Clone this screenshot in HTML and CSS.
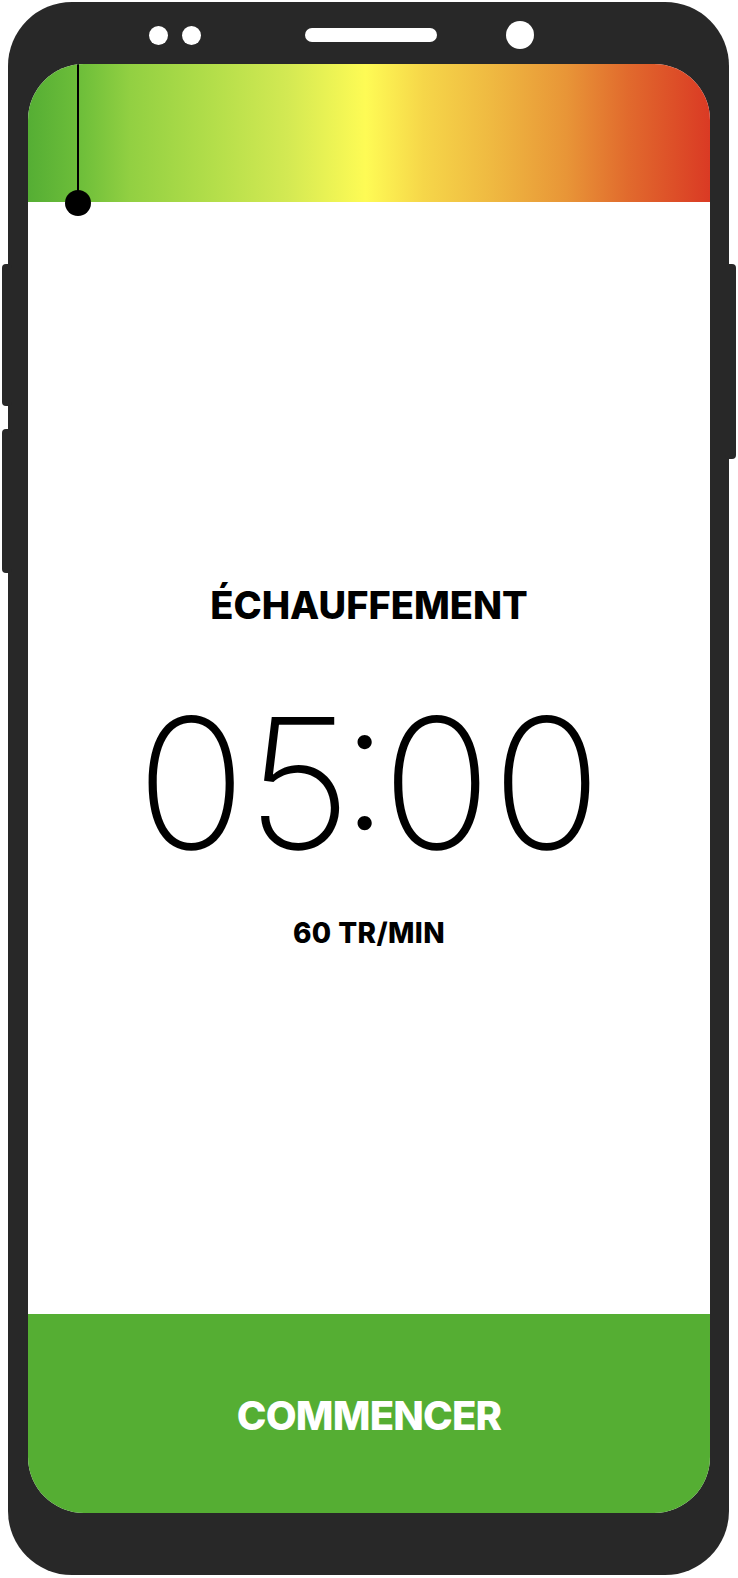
FILE: index.html
```html
<!DOCTYPE html>
<html lang="fr">
<head>
<meta charset="utf-8">
<title>Échauffement</title>
<link rel="stylesheet" href="styles.css">
</head>
<body>
<div class="phone">
  <span class="side-btn side-left-1"></span>
  <span class="side-btn side-left-2"></span>
  <span class="side-btn side-right"></span>
  <div class="bezel-top">
    <span class="dot"></span>
    <span class="dot dot-2"></span>
    <span class="speaker"></span>
    <span class="camera"></span>
  </div>
  <div class="screen">
    <div class="intensity">
      <span class="pointer"></span>
    </div>
    <main class="content">
      <h1 class="phase">ÉCHAUFFEMENT</h1>
      <div class="timer"><span class="digit">0</span><span class="digit digit-tight">5</span><span class="colon">:</span><span class="digit digit-after">00</span></div>
      <div class="cadence">60 TR/MIN</div>
    </main>
    <button class="start">COMMENCER</button>
  </div>
</div>
</body>
</html>
```
FILE: styles.css
```css
html, body {
  margin: 0;
  padding: 0;
  background: #ffffff;
}
body {
  width: 738px;
  height: 1578px;
  overflow: hidden;
  font-family: "Inter", "Liberation Sans", sans-serif;
}
.phone {
  position: relative;
  box-sizing: border-box;
  margin: 2px 0 0 8px;
  width: 721px;
  height: 1573px;
  background: #282828;
  border-radius: 64px;
  padding: 0 19px 62px 20px;
  display: flex;
  flex-direction: column;
}
.side-btn {
  position: absolute;
  background: #282828;
  border-radius: 4px;
}
.side-left-1 { left: -6px; top: 262px; width: 10px; height: 142px; }
.side-left-2 { left: -6px; top: 427px; width: 10px; height: 144px; }
.side-right { right: -7px; top: 262px; width: 11px; height: 195px; }
.bezel-top {
  height: 62px;
  box-sizing: border-box;
  padding: 4px 0 0 121px;
  display: flex;
  align-items: center;
}
.dot {
  width: 19px;
  height: 19px;
  border-radius: 50%;
  background: #ffffff;
}
.dot-2 { margin-left: 14px; }
.speaker {
  margin-left: 104px;
  width: 132px;
  height: 14px;
  border-radius: 7px;
  background: #ffffff;
}
.camera {
  margin-left: 69px;
  width: 28px;
  height: 28px;
  border-radius: 50%;
  background: #ffffff;
}
.screen {
  position: relative;
  flex: 1;
  background: #ffffff;
  border-radius: 56px;
  overflow: hidden;
  display: flex;
  flex-direction: column;
}
.intensity {
  position: relative;
  height: 138px;
  flex: none;
  background: linear-gradient(to right,
    #55ae34 0%, #6fbf3a 8%, #92d042 15%, #b3de4a 27%, #d3e953 38%,
    #fefb55 49.5%, #f6d649 58%, #efb941 68%, #e89537 79%, #e16a2d 88%, #da3a24 100%);
}
.pointer {
  position: absolute;
  left: 49px;
  top: 0;
  width: 2px;
  height: 139px;
  background: #000000;
}
.pointer::after {
  content: "";
  position: absolute;
  left: -12px;
  bottom: -13px;
  width: 26px;
  height: 26px;
  border-radius: 50%;
  background: #000000;
}
.content {
  flex: 1;
  display: flex;
  flex-direction: column;
  align-items: center;
  padding-top: 384px;
  color: #000000;
}
.phase {
  margin: 0;
  font-size: 38px;
  line-height: 1;
  font-weight: 800;
}
.timer {
  margin-top: 68px;
  display: flex;
  align-items: baseline;
  font-size: 182px;
  line-height: 1;
  font-weight: 200;
}
.digit-tight {
  letter-spacing: -12px;
}
.colon {
  letter-spacing: -10px;
  font-feature-settings: "case" 1;
}
.digit-after {
  margin-left: 2px;
}
.cadence {
  margin-top: 45px;
  font-size: 28px;
  line-height: 1;
  font-weight: 800;
  letter-spacing: 0.4px;
}
.start {
  flex: none;
  height: 199px;
  border: 0;
  margin: 0;
  padding: 5px 0 0;
  background: #55ae33;
  color: #ffffff;
  font-family: "Inter", "Liberation Sans", sans-serif;
  font-size: 40px;
  line-height: 1;
  font-weight: 800;
  letter-spacing: -0.8px;
}
```
